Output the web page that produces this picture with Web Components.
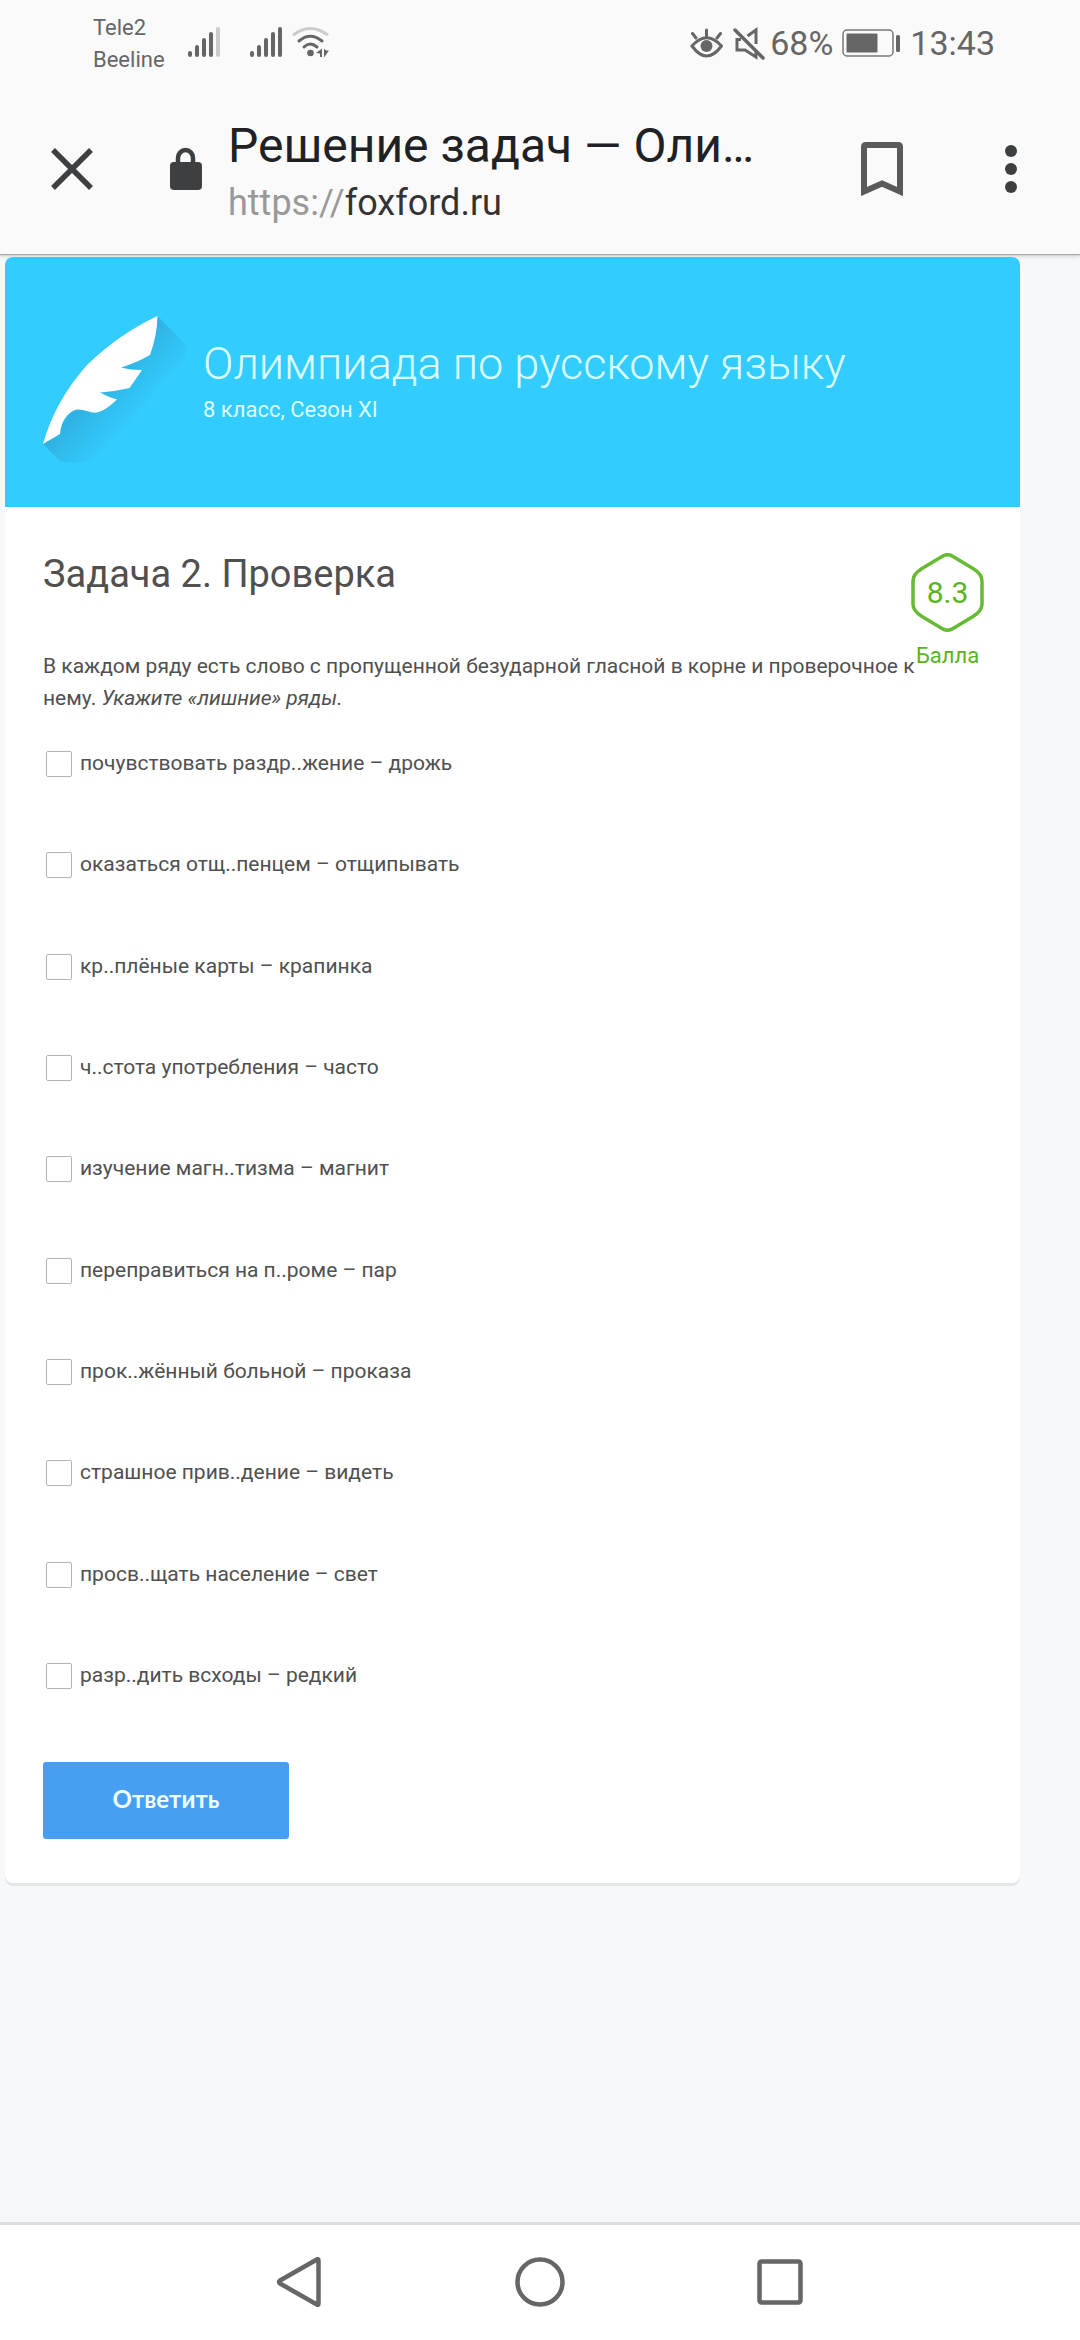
<!DOCTYPE html>
<html lang="ru">
<head>
<meta charset="utf-8">
<meta name="viewport" content="width=device-width">
<title>Решение задач — Олимпиада</title>
<style>
body { margin: 0; background: #f6f8fa; font-family: Roboto, "Noto Sans", sans-serif; color: #505050; }
</style>
</head>
<body>
<olymp-screen></olymp-screen>
<script>
const define = (name, html) => {
  const template = document.createElement('template');
  template.innerHTML = '<style>*{box-sizing:border-box}svg{display:block;flex:none}button{font:inherit;color:inherit;background:none;border:0;padding:0;margin:0}</style>' + html;
  customElements.define(name, class extends HTMLElement {
    constructor() {
      super();
      this.attachShadow({ mode: 'open' }).append(template.content.cloneNode(true));
    }
  });
};

define('status-bar', `
<style>
:host { display: flex; align-items: flex-start; height: 84px; padding: 12px 85px 0 93px; color: #666; }
.carriers { font-size: 22px; line-height: 32px; width: 94px; }
.signals { display: flex; gap: 28px; padding-top: 14px; }
.pair { display: flex; gap: 9px; }
.right { display: flex; align-items: center; margin-left: auto; padding-top: 10px; height: 52px; font-size: 34px; line-height: 40px; }
.eye { margin-right: 10px; }
.mute { margin-right: 5px; }
.battery { margin: 0 9px; }
</style>
<div class="carriers"><div>Tele2</div><div>Beeline</div></div>
<div class="signals">
  <svg width="34" height="32" viewBox="0 0 34 32" fill="none" stroke="#666" stroke-width="4" stroke-linecap="round"><path d="M3 27v2M10 21v8M17 14v15M24 8v21"/><path d="M31 3v26" stroke="#ccc"/></svg>
  <div class="pair">
    <svg width="34" height="32" viewBox="0 0 34 32" fill="none" stroke="#666" stroke-width="4" stroke-linecap="round"><path d="M3 27v2M10 21v8M17 14v15M24 8v21M31 3v26"/></svg>
    <svg width="38" height="32" viewBox="0 0 38 32" fill="none" stroke="#666" stroke-width="3" stroke-linecap="round"><path d="M2 8.500Q18 -3.500 35 8.500" stroke="#ccc"/><path d="M7 15Q18 5.500 30 15M12 21Q18 15 25 21"/><circle cx="18.500" cy="27" r="3.300" fill="#666" stroke="none"/><path d="M24 27l6-4.500v8.500h-2v-3.500zM32 22.500v9l5-7h-3z" fill="#666" stroke="none"/></svg>
  </div>
</div>
<div class="right">
  <svg class="eye" width="33" height="32" viewBox="0 0 33 32" fill="none" stroke="#666" stroke-width="3" stroke-linecap="round"><path d="M2 19Q16.500 2.500 31.500 19Q16.500 39 2 19zM16.500 9V3M6 11L2.500 6.500M27 11l3.500-4.500"/><circle cx="16.500" cy="19" r="6" fill="#666" stroke="none"/></svg>
  <svg class="mute" width="32" height="33" viewBox="0 0 32 33" fill="none" stroke="#666" stroke-width="3"><path d="M2 3L30 31" stroke-width="3.500" stroke-linecap="round"/><path d="M8 12.500H4V23h8l11 7v-7M14.500 9L23 3v14"/></svg>
  <span>68%</span>
  <svg class="battery" width="59" height="28" viewBox="0 0 59 28"><rect x="1" y="1" width="50" height="26" rx="4" fill="none" stroke="#777" stroke-width="1.500"/><rect x="4.500" y="4.500" width="31" height="19" rx="1" fill="#666"/><rect x="54" y="6" width="4" height="17" rx="1.500" fill="#666"/></svg>
  <span>13:43</span>
</div>`);

define('browser-toolbar', `
<style>
:host { display: flex; align-items: center; height: 170px; padding: 0 63px 0 51px; }
.close { margin-right: 76px; }
.page { flex: 1; min-width: 0; padding-top: 8px; margin: 0 96px 0 26px; }
h1 { margin: 0; font-size: 48px; line-height: 60px; font-weight: 400; color: #202124; white-space: nowrap; }
a { display: block; font-size: 36px; line-height: 54px; color: #333; text-decoration: none; }
a span { color: #999; }
.save { margin-right: 102px; }
</style>
<button class="close" aria-label="Закрыть"><svg width="42" height="42" viewBox="0 0 42 42" stroke="#3c4043" stroke-width="5.500"><path d="M2 2L40 40M40 2L2 40"/></svg></button>
<svg width="33" height="44" viewBox="0 0 33 44"><path d="M9 17v-6a7.500 8 0 0 1 15 0v6" fill="none" stroke="#3c4043" stroke-width="4.500"/><rect x="1" y="15" width="32" height="28" rx="4" fill="#3c4043"/></svg>
<div class="page"><h1>Решение задач — Оли…</h1><a href="#"><span>https://</span>foxford.ru</a></div>
<button class="save" aria-label="В закладки"><svg width="42" height="54" viewBox="0 0 42 54" fill="none" stroke="#5a5a5a" stroke-width="6"><path d="M3 49.500V5Q3 3 5 3H37Q39 3 39 5V49.500L21 41.500z"/></svg></button>
<button aria-label="Меню"><svg width="12" height="48" viewBox="0 0 12 48" fill="#3c4043"><circle cx="6" cy="6" r="6"/><circle cx="6" cy="24" r="6"/><circle cx="6" cy="42" r="6"/></svg></button>`);

define('olymp-banner', `
<style>
:host { display: flex; align-items: center; gap: 16px; height: 250px; padding-left: 38px; background: #3cf; border-radius: 8px 8px 0 0; color: #dff; }
h2 { margin: 0 0 4px; font-size: 45px; line-height: 52px; font-weight: 300; }
p { margin: 0; font-size: 22px; line-height: 32px; }
</style>
<svg width="144" height="176" viewBox="0 0 144 176">
  <defs><linearGradient id="shade" gradientUnits="userSpaceOnUse" x1="70" y1="62" x2="114" y2="102"><stop offset="0" stop-color="#2a8fb8" stop-opacity=".5"/><stop offset="1" stop-color="#2a8fb8" stop-opacity="0"/></linearGradient></defs>
  <path d="M114.500 22L143 51V168H18L0 150z" fill="url(#shade)"/>
  <path d="M114.500 22Q114 42 107 61Q93 69 78 73.500Q87 76 99 76L86.500 94Q72 97.500 57 98.500Q65 103 74 105.500Q62 117 54 118.500C48 119.500 41 115 34 115.500C26 117 18 126 17 140L0 150Q12 107 44 71Q76 40 114.500 22z" fill="#fff"/>
</svg>
<div><h2><slot name="title"></slot></h2><p><slot name="note"></slot></p></div>`);

define('score-badge', `
<style>
:host { display: block; width: 73px; color: #5ab41e; text-align: center; }
.hex { display: grid; place-items: center; height: 79px; margin-bottom: 10px; }
.hex > * { grid-area: 1 / 1; }
.value { font-size: 30px; line-height: 36px; }
.unit { font-size: 22px; line-height: 28px; }
</style>
<div class="hex">
  <svg width="73" height="79" viewBox="0 0 73 79" fill="none" stroke="#6b3" stroke-width="3.500"><path d="M31 3.500Q36.500 0 42 3.500L62 15.500Q71 21 71 28V51Q71 58 62 63.500L42 75.500Q36.500 79 31 75.500L11 63.500Q2 58 2 51V28Q2 21 11 15.500z"/></svg>
  <span class="value"><slot></slot></span>
</div>
<div class="unit"><slot name="unit"></slot></div>`);

define('answer-option', `
<style>
:host { display: block; }
label { display: flex; align-items: center; gap: 8px; padding-left: 3px; font-size: 21px; line-height: 32px; }
input { appearance: none; width: 26px; height: 26px; margin: 2px 0 0; border: 1px solid #b4b4b4; border-radius: 2px; background: #fff; flex: none; }
input:checked { background: #469ff3; }
</style>
<label><input type="checkbox"><span><slot></slot></span></label>`);

define('task-card', `
<style>
:host { display: block; margin: 3px 60px 0 5px; background: #fff; border-radius: 8px; box-shadow: 0 3px 0 #e4e7e9; }
.body { padding: 43px 36px 44px 38px; }
.intro { display: flex; justify-content: space-between; margin-bottom: 33px; }
.text { flex: 1; min-width: 0; margin-right: -8px; }
score-badge { margin-top: 3px; flex: none; }
h3 { margin: 0 0 52px; font-size: 38px; line-height: 48px; font-weight: 400; }
p { margin: 0; font-size: 21px; line-height: 32px; }
.options { display: flex; flex-direction: column; justify-content: space-between; min-height: 944px; }
.submit { display: block; width: 246px; height: 77px; margin-top: 71px; padding-bottom: 4px; background: #469ff3; color: #eff; border-radius: 3px; font: 700 24px/32px Lato, "Noto Sans", sans-serif; }
</style>
<olymp-banner><span slot="title">Олимпиада по русскому языку</span><span slot="note">8 класс, Сезон XI</span></olymp-banner>
<div class="body">
  <div class="intro">
    <div class="text"><h3>Задача 2. Проверка</h3>
    <p>В каждом ряду есть слово с пропущенной безударной гласной в корне и проверочное к нему. <em>Укажите «лишние» ряды.</em></p></div>
    <score-badge>8.3<span slot="unit">Балла</span></score-badge>
  </div>
  <div class="options">
    <answer-option>почувствовать раздр..жение – дрожь</answer-option>
    <answer-option>оказаться отщ..пенцем – отщипывать</answer-option>
    <answer-option>кр..плёные карты – крапинка</answer-option>
    <answer-option>ч..стота употребления – часто</answer-option>
    <answer-option>изучение магн..тизма – магнит</answer-option>
    <answer-option>переправиться на п..роме – пар</answer-option>
    <answer-option>прок..жённый больной – проказа</answer-option>
    <answer-option>страшное прив..дение – видеть</answer-option>
    <answer-option>просв..щать население – свет</answer-option>
    <answer-option>разр..дить всходы – редкий</answer-option>
  </div>
  <button class="submit">Ответить</button>
</div>`);

define('system-nav', `
<style>
:host { display: flex; justify-content: center; align-items: center; gap: 190px; height: 118px; padding-bottom: 2px; background: #fff; border-top: 3px solid #dedede; }
</style>
<button aria-label="Назад"><svg width="50" height="50" viewBox="0 0 50 50" fill="none" stroke="#666" stroke-width="4.500" stroke-linejoin="round"><path d="M43.500 3.500Q43.500 1 41 3L5 23.500Q3 25 5 26.500L41 47Q43.500 49 43.500 46.500z"/></svg></button>
<button aria-label="Домой"><svg width="50" height="50" viewBox="0 0 50 50" fill="none" stroke="#666" stroke-width="4.500"><circle cx="25" cy="25" r="22.500"/></svg></button>
<button aria-label="Недавние"><svg width="50" height="50" viewBox="0 0 50 50" fill="none" stroke="#666" stroke-width="4.500"><rect x="4.500" y="4.500" width="41" height="41" rx="2"/></svg></button>`);

define('olymp-screen', `
<style>
:host { display: flex; flex-direction: column; min-height: 100vh; }
header { background: #fafafa; box-shadow: 0 1px 1px #aaa, 0 2px 4px #ccc; }
main { flex: 1; }
</style>
<header><status-bar></status-bar><browser-toolbar></browser-toolbar></header>
<main><task-card></task-card></main>
<system-nav></system-nav>`);
</script>
</body>
</html>
